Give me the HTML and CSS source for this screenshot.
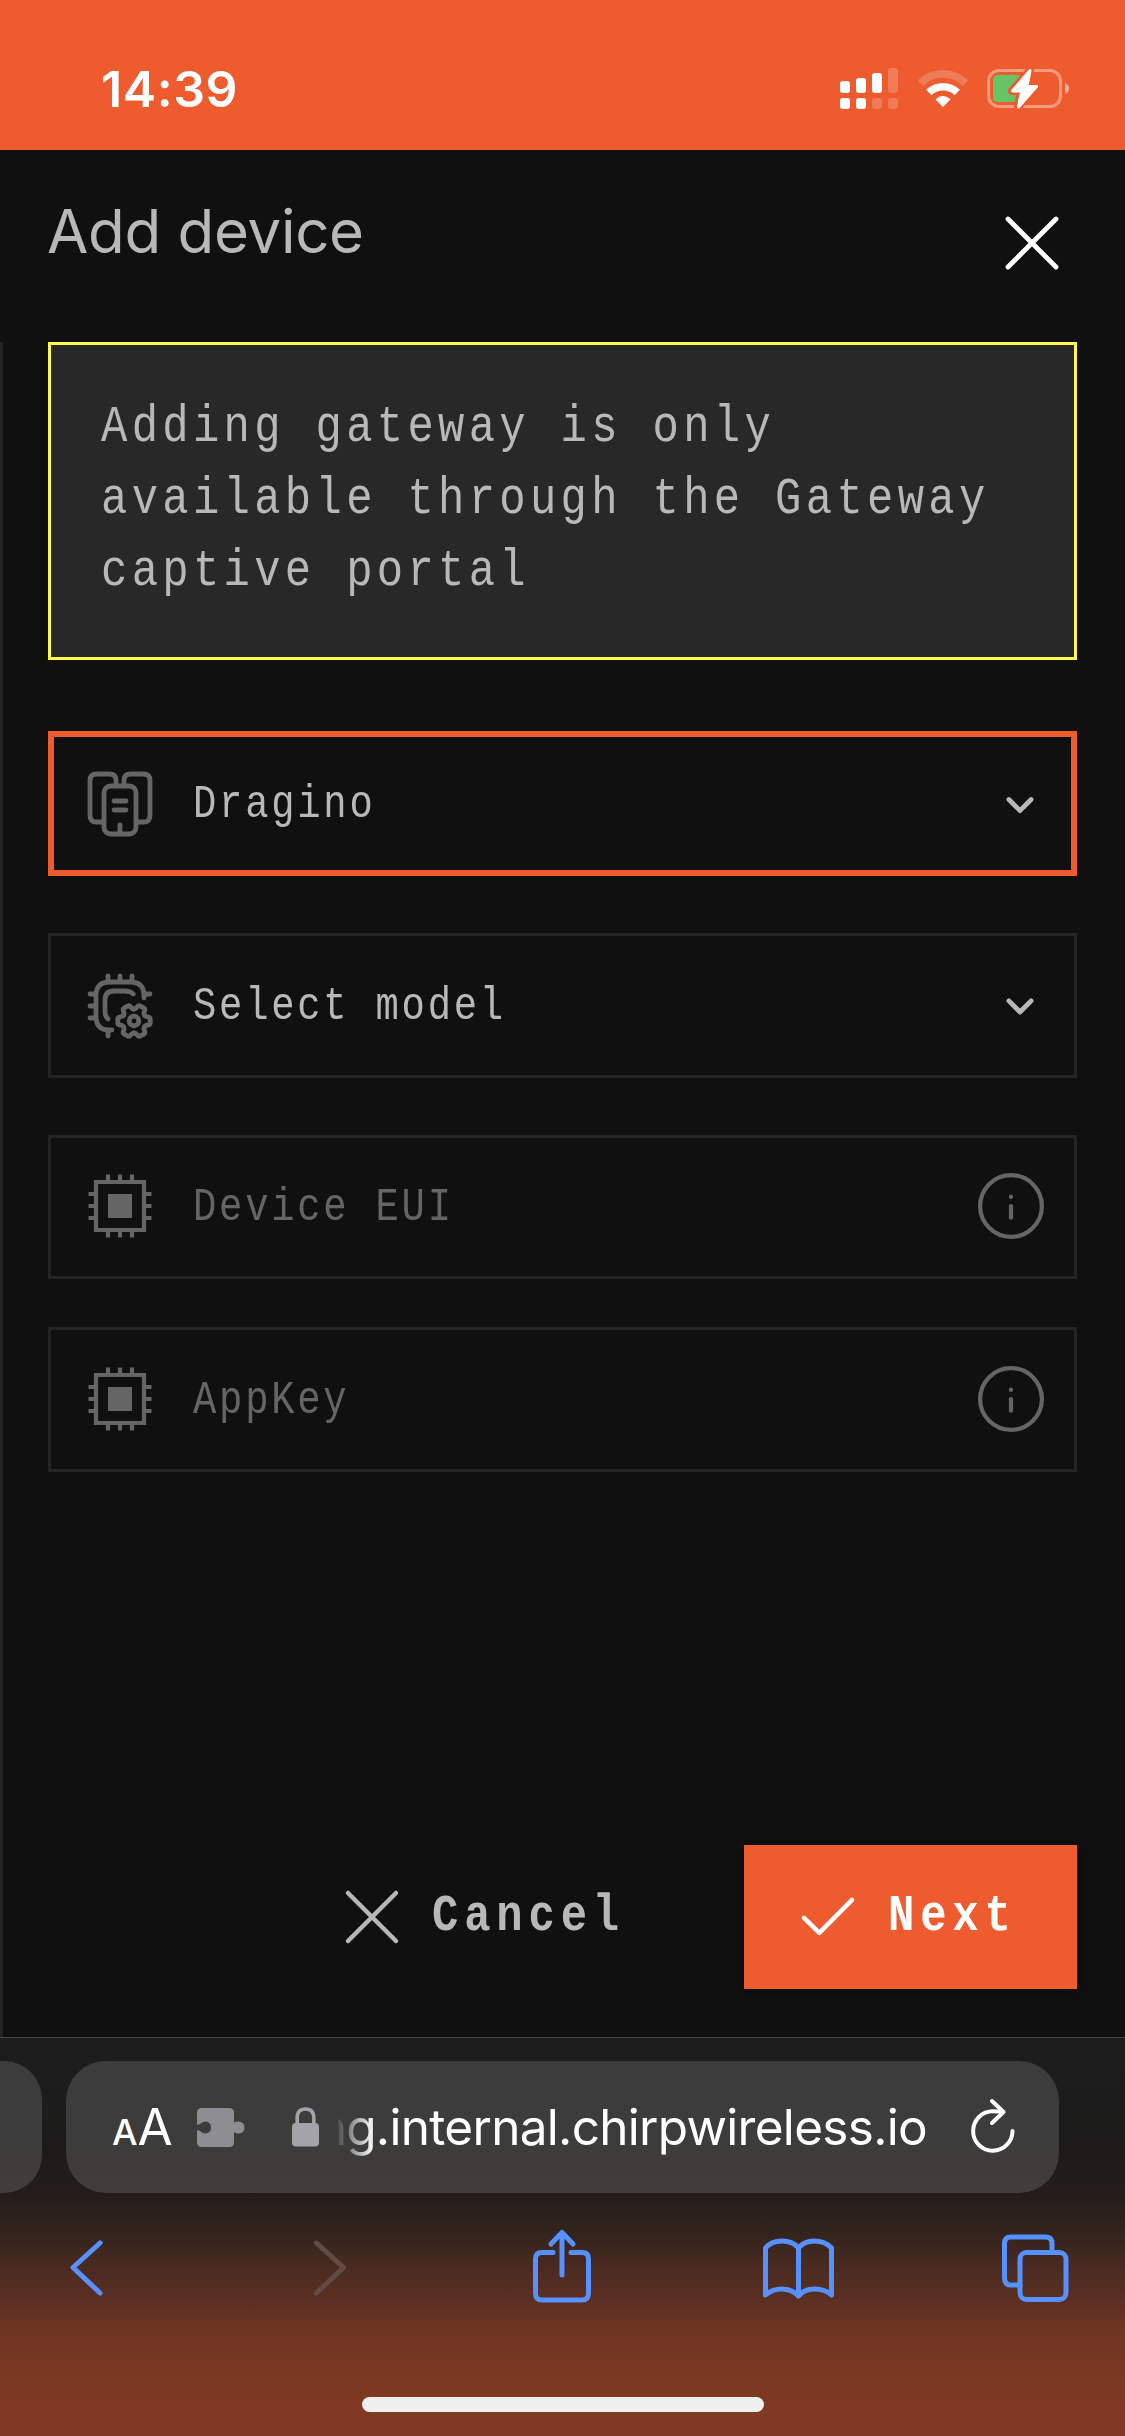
FILE: index.html
```html
<!DOCTYPE html>
<html lang="en">
<head>
<meta charset="utf-8">
<title>Add device</title>
<link rel="stylesheet" href="styles.css">
</head>
<body>
<div class="screen">
  <header class="status">
    <span class="time">14:39</span>
    <div class="status-icons">
      <svg class="signal" width="58" height="41" viewBox="0 0 58 41" fill="#fff">
        <rect x="0" y="13" width="10" height="12" rx="3"/><rect x="16" y="10" width="10" height="15" rx="3"/><rect x="32" y="5" width="10" height="20" rx="3"/>
        <rect x="0" y="30" width="10" height="11" rx="3"/><rect x="16" y="30" width="10" height="11" rx="3"/>
        <g opacity=".2"><rect x="48" y="0" width="10" height="25" rx="3"/><rect x="32" y="30" width="10" height="11" rx="3"/><rect x="48" y="30" width="10" height="11" rx="3"/></g>
      </svg>
      <svg class="wifi" width="52" height="41" viewBox="0 0 52 41" fill="none" stroke="#fff">
        <path d="M3.4 15.2A32 32 0 0 1 48.6 15.2" stroke-width="7.6" opacity=".2"/>
        <path d="M11.8 24.4A20.5 20.5 0 0 1 40.200 24.4" stroke-width="7.6"/>
        <path d="M18.500 31.300Q26 24.500 33.500 31.300L26.600 38.600Q26 39.200 25.400 38.600Z" fill="#fff" stroke="none"/>
      </svg>
      <svg class="battery" width="84" height="41" viewBox="0 0 84 41">
        <rect x="1.500" y="2.500" width="72" height="36" rx="10.500" fill="none" stroke="#fff" stroke-width="3" opacity=".4"/>
        <path d="M78 15Q82 16.500 82 20.500T78 26Z" fill="#fff" opacity=".5"/>
        <path d="M11 7H32V34H11Q6 34 6 29V12Q6 7 11 7Z" fill="#67c466"/>
        <path d="M43 2L25 23H33.500L31 39L50 18H41Z" fill="#ed5b2f" stroke="#ed5b2f" stroke-width="8" stroke-linejoin="round"/>
        <path d="M43 2.500L25.500 23H34.500L31.500 39L49.500 18.500H40Z" fill="#fff" stroke="#fff" stroke-width="3" stroke-linejoin="round"/>
      </svg>
    </div>
  </header>

  <div class="title-bar">
    <h1 class="title">Add device</h1>
    <svg class="close" width="72" height="72" viewBox="0 0 24 24" fill="none" stroke="#fff" stroke-width="1.600" stroke-linecap="round"><path d="M4 4L20 20M20 4L4 20"/></svg>
  </div>

  <main class="panel">
    <div class="notice"><p class="notice-text">Adding gateway is only available through the Gateway captive portal</p></div>

    <div class="field field-active">
      <svg class="icon" viewBox="0 0 24 24"><rect x="6.670" y="6" width="10.660" height="16" rx="2.200"/><path d="M10.670 6V4.200Q10.670 2 8.470 2H4.200Q2 2 2 4.200V15.800Q2 18 4.200 18H6.670M13.330 6V4.200Q13.330 2 15.530 2H19.800Q22 2 22 4.200V15.800Q22 18 19.800 18H17.330M10 11H14M10 14H14M12 19V22"/></svg>
      <span class="label">Dragino</span>
      <svg class="arrow" viewBox="0 0 24 24"><path d="M8.300 10.500L12 14.200L15.700 10.500"/></svg>
    </div>

    <div class="field">
      <svg class="icon" viewBox="0 0 24 24"><path d="M20 9.300V8.500Q20 4 15.500 4H8.500Q4 4 4 8.500V15.500Q4 20 8.500 20H9.300M8 2V4M12 2V4M16 2V4M2 8H4M2 12H4M2 16H4M20 8H22M8 20V22M8 16.300Q7 15.500 7 13.500V10Q7 7 10 7H13.500Q15.500 7 16.400 8"/>
        <g transform="translate(16.670 17)"><circle r="1.600"/><path id="tooth" d="M3.460 -2Q3.700 -1.500 4.600 -1.400Q5.400 -1.300 5.400 -.6V.6Q5.400 1.300 4.600 1.400Q3.700 1.500 3.460 2"/><use href="#tooth" transform="rotate(60)"/><use href="#tooth" transform="rotate(120)"/><use href="#tooth" transform="rotate(180)"/><use href="#tooth" transform="rotate(240)"/><use href="#tooth" transform="rotate(300)"/></g></svg>
      <span class="label">Select model</span>
      <svg class="arrow" viewBox="0 0 24 24"><path d="M8.300 10.300L12 14L15.700 10.300"/></svg>
    </div>

    <div class="field field-empty">
      <svg class="icon icon-chip" viewBox="0 0 24 24"><path d="M4 4H20V20H4ZM8 1.500V4M12 1.500V4M16 1.500V4M8 20V22.500M12 20V22.500M16 20V22.500M1.500 8H4M1.500 12H4M1.500 16H4M20 8H22.500M20 12H22.500M20 16H22.500"/><rect class="core" x="8" y="8" width="8" height="8"/></svg>
      <span class="label">Device EUI</span>
      <svg class="info" viewBox="0 0 24 24"><circle cx="12" cy="12" r="10.300"/><path d="M12 12V15.900M12 8.900V9"/></svg>
    </div>

    <div class="field field-empty field-key">
      <svg class="icon icon-chip" viewBox="0 0 24 24"><path d="M4 4H20V20H4ZM8 1.500V4M12 1.500V4M16 1.500V4M8 20V22.500M12 20V22.500M16 20V22.500M1.500 8H4M1.500 12H4M1.500 16H4M20 8H22.500M20 12H22.500M20 16H22.500"/><rect class="core" x="8" y="8" width="8" height="8"/></svg>
      <span class="label">AppKey</span>
      <svg class="info" viewBox="0 0 24 24"><circle cx="12" cy="12" r="10.300"/><path d="M12 12V15.900M12 8.900V9"/></svg>
    </div>

    <div class="actions">
      <div class="button cancel"><svg class="button-icon" viewBox="0 0 24 24"><path d="M4 4L20 20M20 4L4 20"/></svg><span class="button-text">Cancel</span></div>
      <div class="button next"><svg class="button-icon" viewBox="0 0 24 24"><path d="M4 12.300L9.100 17.300L20 6.300"/></svg><span class="button-text">Next</span></div>
    </div>
  </main>

  <footer class="browser">
    <div class="tabs">
      <div class="tab-peek"></div>
      <div class="address">
        <div class="reader"><span class="small-a">A</span><span class="big-a">A</span></div>
        <svg class="puzzle" width="48" height="39" viewBox="0 0 48 39" fill="#8e8d92"><path d="M5 0H32Q37 0 37 5V14.500Q39 13.500 41.500 13.500Q47.500 14 47.500 19.500T41.500 25.500Q39 25.500 37 24V34Q37 39 32 39H5Q0 39 0 34V22.500Q1.500 22 3 23Q5.500 25.500 8.500 25.500Q14 25 14 19.500T8.500 13.500Q5.500 13.500 3 16Q1.500 17 0 16.500V5Q0 0 5 0Z"/></svg>
        <svg class="lock" width="28" height="40" viewBox="0 0 28 40"><rect x="0" y="16" width="27" height="23.500" rx="4" fill="#a5a3aa"/><path d="M5.200 17V11Q5.200 2 13.500 2T21.800 11V17" fill="none" stroke="#a5a3aa" stroke-width="3.600"/></svg>
        <div class="url"><span class="url-text">ng.internal.chirpwireless.io</span></div>
        <svg class="reload" width="46" height="56" viewBox="0 0 46 56" fill="none" stroke="#fff" stroke-width="4" stroke-linecap="round" stroke-linejoin="round"><path d="M42.500 33A19.700 19.700 0 1 1 23 13.300Q29 13.300 33.500 14M22 3L33.500 14L22 25"/></svg>
      </div>
    </div>
    <div class="tools">
      <svg class="tool" viewBox="0 0 72 80"><path d="M51 15L24 39.500L51 65"/></svg>
      <svg class="tool disabled" viewBox="0 0 72 80"><path d="M29.500 15L56.500 39.500L29.500 65"/></svg>
      <svg class="tool" viewBox="0 0 72 80"><path d="M29 24.500H18Q11.500 24.500 11.500 31V65.500Q11.500 72 18 72H58Q64.500 72 64.500 65.500V31Q64.500 24.500 58 24.500H47M38 47V5M27 16L38 4.500L49 16"/></svg>
      <svg class="tool" viewBox="0 0 72 80"><path d="M36.500 20Q31 13 20 13T3.500 20V67Q10 61 20 61T36.500 68Q42 61 52.500 61T69.500 67V20Q63 13 52.500 13T36.500 20V68"/></svg>
      <svg class="tool" viewBox="0 0 72 80"><rect x="21" y="24.500" width="46" height="47" rx="6.500"/><path d="M53 24.500V15.500Q53 9 46.500 9H12Q5.500 9 5.500 15.500V50Q5.500 57 12 57H21"/></svg>
    </div>
    <div class="home"></div>
  </footer>
</div>
</body>
</html>
```
FILE: styles.css
```css
* { box-sizing: border-box; }
body { margin: 0; background: #101010; }
svg { display: block; flex: none; }

.screen {
  width: 1125px;
  height: 2436px;
  display: flex;
  flex-direction: column;
  overflow: hidden;
  background: #101010;
  font-family: Inter, "Liberation Sans", sans-serif;
}

/* Status bar */
.status {
  height: 150px;
  display: flex;
  justify-content: space-between;
  padding: 58px 54px 0 101px;
  background: #ed5b2f;
  color: #fff;
}
.time { font-size: 50px; line-height: 62px; font-weight: 600; letter-spacing: 0.6px; }
.status-icons { display: flex; padding-top: 10px; }
.wifi { margin-left: 19px; }
.battery { margin-left: 18px; }

/* Title */
.title-bar {
  height: 192px;
  display: flex;
  justify-content: space-between;
  padding: 45px 57px 0 47px;
}
.title {
  margin: 0;
  font-size: 60px;
  line-height: 72px;
  font-weight: 400;
  letter-spacing: -0.3px;
  color: #b8b8b8;
}
.close { margin-top: 12px; }

/* Form panel */
.panel {
  height: 1695px;
  display: flex;
  flex-direction: column;
  border-left: 3px solid #242424;
  padding: 0 48px 48px 45px;
  font-family: "Liberation Mono", monospace;
  color: #b8b8b8;
}
.notice {
  height: 318px;
  margin-bottom: 71px;
  padding: 47px 0 0 50px;
  border: 3px solid #fff84c;
  background: #282828;
}
/* The lettering is condensed horizontally and tracked out */
.notice-text {
  width: 1060px;
  margin: 0;
  font-size: 52px;
  line-height: 72px;
  letter-spacing: 5.1px;
  transform: scaleX(0.844);
  transform-origin: left;
}
.field {
  height: 145px;
  margin-bottom: 57px;
  display: flex;
  align-items: center;
  padding: 0 18px 0 33px;
  border: 3px solid #242424;
  font-size: 46px;
}
.field-active { border: 6px solid #ed5b2f; padding: 0 15px 0 30px; }
.field-empty { height: 144px; margin-bottom: 48px; padding: 0 27px 2px 33px; color: #656565; }
.field-key { height: 145px; }
.label {
  flex: 1;
  margin-left: 37px;
  padding-top: 2px;
  line-height: 60px;
  letter-spacing: 3.25px;
  transform: scaleX(0.845);
  transform-origin: left;
}
.field-empty .label { padding-top: 4px; }
.icon, .arrow, .info {
  width: 72px;
  height: 72px;
  fill: none;
  stroke: #656565;
  stroke-width: 1.6;
  stroke-linecap: round;
  stroke-linejoin: round;
}
.icon-chip { stroke-width: 1.4; stroke-linecap: butt; stroke-linejoin: miter; }
.core { fill: #656565; stroke: none; }
.arrow { stroke: #b8b8b8; }
.info { stroke-width: 1.4; }

.actions {
  margin-top: auto;
  display: flex;
  justify-content: flex-end;
}
.button {
  height: 144px;
  display: flex;
  align-items: center;
  font-size: 52px;
  line-height: 60px;
  font-weight: 700;
  letter-spacing: 6.9px;
}
.button-icon {
  width: 72px;
  height: 72px;
  fill: none;
  stroke: currentColor;
  stroke-width: 1.5;
  stroke-linecap: round;
  stroke-linejoin: round;
}
.button-text { margin-left: 24px; transform: scaleX(0.844); transform-origin: left; }
.cancel { width: 408px; }
.next { width: 333px; padding-left: 48px; background: #ed5b2f; color: #fff; box-shadow: 0 3px 12px rgba(0, 0, 0, 0.5); }

/* Browser chrome */
.browser {
  flex: 1;
  display: flex;
  flex-direction: column;
  border-top: 1px solid #454545;
  padding-top: 23px;
  background: linear-gradient(#1d1d1d 0, #1c1b1a 110px, #241c1a 155px, #33241d 195px, #4b2b21 232px, #5a2f22 260px, #6e3422 290px, #7a3822 335px, #803922 370px, #803922 399px);
}
.tabs { display: flex; gap: 24px; height: 132px; }
.tab-peek { width: 42px; border-radius: 0 38px 38px 0; background: rgba(255, 255, 255, 0.145); }
.address {
  width: 993px;
  display: flex;
  align-items: center;
  border-radius: 40px;
  padding: 0 43px 0 46px;
  background: rgba(255, 255, 255, 0.145);
  color: #fff;
}
.reader { width: 61px; height: 60px; display: flex; align-items: baseline; line-height: 60px; }
.small-a { font-size: 36px; font-weight: 500; }
.big-a { font-size: 51px; }
.puzzle { margin-left: 24px; }
.lock { margin-left: 47px; }
.url {
  width: 608px;
  height: 60px;
  margin-left: 18px;
  display: flex;
  justify-content: flex-end;
  -webkit-mask-image: linear-gradient(90deg, transparent -4px, #000 36px);
  mask-image: linear-gradient(90deg, transparent -4px, #000 36px);
}
.url-text { font-size: 49.500px; line-height: 60px; letter-spacing: -0.7px; white-space: nowrap; margin-right: 19px; }
.reload { margin-left: 24px; margin-top: -3px; }
.tools { display: flex; justify-content: space-between; padding: 35px 54px 0 49px; }
.tool {
  width: 72px;
  height: 80px;
  fill: none;
  stroke: #5790ff;
  stroke-width: 5;
  stroke-linecap: round;
  stroke-linejoin: round;
}
.disabled { stroke: #614b44; }
.home { width: 402px; height: 15px; margin: 89px 0 0 362px; border-radius: 8px; background: #efefef; }
```
